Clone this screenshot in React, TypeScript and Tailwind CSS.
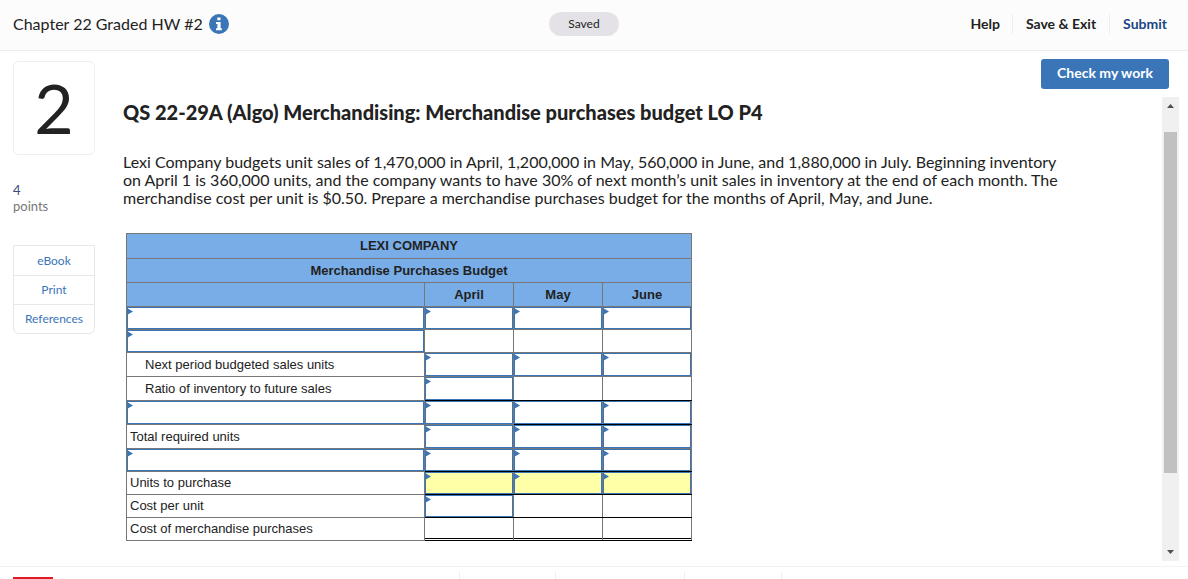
import React, { ReactNode } from 'react';

type Line = 'gray' | 'black';

interface BudgetRow {
  label?: string;
  indent?: boolean;
  tall?: boolean;
  // one flag per month: does the cell take an answer?
  inputs: [boolean, boolean, boolean];
  lines: [Line, Line, Line];
  highlight?: boolean;
  total?: boolean;
}

const MONTHS = ['April', 'May', 'June'];

const ROWS: BudgetRow[] = [
  { inputs: [true, true, true], lines: ['gray', 'gray', 'gray'] },
  { inputs: [false, false, false], lines: ['gray', 'gray', 'gray'] },
  { label: 'Next period budgeted sales units', indent: true, tall: true, inputs: [true, true, true], lines: ['gray', 'gray', 'gray'] },
  { label: 'Ratio of inventory to future sales', indent: true, tall: true, inputs: [true, false, false], lines: ['black', 'black', 'black'] },
  { tall: true, inputs: [true, true, true], lines: ['gray', 'black', 'black'] },
  { label: 'Total required units', tall: true, inputs: [true, true, true], lines: ['gray', 'gray', 'gray'] },
  { inputs: [true, true, true], lines: ['black', 'black', 'black'] },
  { label: 'Units to purchase', inputs: [true, true, true], lines: ['black', 'black', 'black'], highlight: true },
  { label: 'Cost per unit', inputs: [true, false, false], lines: ['black', 'black', 'black'] },
  { label: 'Cost of merchandise purchases', inputs: [false, false, false], lines: ['black', 'black', 'black'], total: true },
];

interface AnswerBoxProps {
  name: string;
  tall?: boolean;
  highlight?: boolean;
}

const AnswerBox = ({ name, tall, highlight }: AnswerBoxProps) => (
  <div className="relative">
    <input
      type="text"
      aria-label={name}
      className={`block w-full border border-[#3a75b8] px-2 outline-none ${tall ? 'h-[23px]' : 'h-[22px]'} ${
        highlight ? 'bg-[#ffffa8]' : 'bg-white'
      }`}
    />
    <svg className="absolute top-px left-0" width="6" height="7" viewBox="0 0 6 7" aria-hidden="true">
      <path d="M0 0 L6 3.5 L0 7 Z" fill="#3a75b8" />
    </svg>
  </div>
);

const HeadCell = ({ children, span }: { children?: ReactNode; span?: number }) => (
  <th colSpan={span} className="border border-[#777777] bg-[#79ade7] p-0 text-center font-bold">
    {children}
  </th>
);

const BudgetTable = () => (
  <table className="ml-[3px] w-[566px] table-fixed border-collapse font-['Liberation_Sans',Arial,sans-serif] text-[13px] text-[#222222]">
    <colgroup>
      <col />
      <col className="w-[89px]" />
      <col className="w-[89px]" />
      <col className="w-[89px]" />
    </colgroup>
    <thead>
      <tr className="h-[25px]">
        <HeadCell span={4}>LEXI COMPANY</HeadCell>
      </tr>
      <tr className="h-6">
        <HeadCell span={4}>Merchandise Purchases Budget</HeadCell>
      </tr>
      <tr className="h-6">
        <HeadCell />
        {MONTHS.map((month) => (
          <HeadCell key={month}>{month}</HeadCell>
        ))}
      </tr>
    </thead>
    <tbody>
      {ROWS.map((row, i) => (
        <tr key={i}>
          <td className="border border-[#777777] p-0">
            {row.label ? (
              <div className={`${row.tall ? 'leading-[23px]' : 'leading-[22px]'} ${row.indent ? 'pl-[18px]' : 'pl-[3px]'}`}>
                {row.label}
              </div>
            ) : (
              <AnswerBox name={`Row ${i + 1} description`} tall={row.tall} />
            )}
          </td>
          {MONTHS.map((month, m) => (
            <td
              key={month}
              className={`border border-[#777777] p-0 align-top ${row.lines[m] === 'black' ? 'border-b-black' : ''}`}
            >
              {row.inputs[m] && (
                <AnswerBox name={`${row.label ?? `Row ${i + 1}`}, ${month}`} tall={row.tall} highlight={row.highlight} />
              )}
              {/* second rule of the double underline */}
              {row.total && <div className="h-[21px] border-b border-black" />}
            </td>
          ))}
        </tr>
      ))}
    </tbody>
  </table>
);

const InfoIcon = () => (
  <svg width="20" height="20" viewBox="0 0 20 20" aria-hidden="true">
    <circle cx="10" cy="10" r="10" fill="#3a75b8" />
    <path d="M8.3 3.4h3.2v2.8H8.3z M7 8h4.6v6.2h1.2v2H7v-2h1.4V10H7z" fill="#ffffff" />
  </svg>
);

const Header = () => (
  <header className="grid h-[51px] shrink-0 grid-cols-[1fr_auto_1fr] items-center border-b border-[#eeeeee] bg-[#fcfcfc] px-[13px] pb-[2px]">
    <div className="flex items-center gap-[6px]">
      <h1 className="text-[16px]">Chapter 22 Graded HW #2</h1>
      <button type="button" aria-label="Assignment information">
        <InfoIcon />
      </button>
    </div>
    <div className="mr-5 h-6 w-[70px] rounded-full bg-[#e4e2e6] text-center text-[12px] leading-6">Saved</div>
    <nav className="flex items-center justify-end text-[14px] leading-5 font-bold">
      <button type="button" className="px-3">Help</button>
      <button type="button" className="border-x border-[#eeeeee] px-[13px]">Save &amp; Exit</button>
      <button type="button" className="pr-2 pl-[13px] text-[#1a4685]">Submit</button>
    </nav>
  </header>
);

const Sidebar = () => (
  <aside className="w-[82px] shrink-0 pt-[10px]">
    <div className="flex h-[94px] items-center justify-center rounded-md border border-[#eeeeee] text-[68px] leading-none">
      2
    </div>
    <div className="mt-[27px] text-[13px] leading-4 text-[#777777]">
      <div className="text-[#3b4a78]">4</div>
      <div>points</div>
    </div>
    <ul className="mt-[31px] divide-y divide-[#e8e8e8] rounded-b-md border border-[#e8e8e8] text-center text-[12px] text-[#3a75b8]">
      <li><a href="#ebook" className="block leading-[29px]">eBook</a></li>
      <li><a href="#print" className="block leading-[28px]">Print</a></li>
      <li><a href="#references" className="block leading-[28px]">References</a></li>
    </ul>
  </aside>
);

const ScrollTrack = () => (
  <div className="flex w-[17px] shrink-0 flex-col items-center bg-[#f0f0f0]" aria-hidden="true">
    <svg className="shrink-0" width="17" height="17" viewBox="0 0 17 17">
      <path d="M8.5 7 L12 11 H5 Z" fill="#505050" />
    </svg>
    <div className="mt-[18px] h-[341px] w-[13px] bg-[#c1c1c1]" />
    <svg className="mt-auto shrink-0" width="17" height="17" viewBox="0 0 17 17">
      <path d="M5 6 H12 L8.5 10 Z" fill="#505050" />
    </svg>
  </div>
);

const Footer = () => (
  <footer className="flex h-[13px] shrink-0 items-end overflow-hidden border-t border-[#f2f2f2] px-[13px]">
    <div className="h-[2px] w-10 bg-[#e21a23]" />
    <div className="flex flex-1 justify-center">
      <div className="ml-3 grid h-[7px] grid-cols-[96px_129px_97px] border-l border-[#eeeeee]">
        <div className="border-r border-[#eeeeee]" />
        <div className="border-r border-[#eeeeee]" />
        <div className="border-r border-[#eeeeee]" />
      </div>
    </div>
  </footer>
);

const App = () => (
  <div className="flex h-screen min-h-[579px] flex-col bg-white font-[Lato,sans-serif] text-[#222222]">
    <Header />
    <div className="flex flex-1 pr-[9px] pl-[13px]">
      <Sidebar />
      <div className="flex flex-1 flex-col pt-2 pb-[5px] pl-7">
        <button
          type="button"
          className="mr-[10px] h-[30px] w-32 self-end rounded-[3px] bg-[#3a75b8] pb-[3px] text-[14px] font-bold text-white"
        >
          Check my work
        </button>
        <div className="mt-2 flex flex-1 justify-between">
          <main className="pt-[3px]">
            <h2 className="text-[20px] leading-6 font-black">
              QS 22-29A (Algo) Merchandising: Merchandise purchases budget LO P4
            </h2>
            <p className="mt-[29px] mb-[26px] max-w-[936px] text-[16px] leading-[18px]">
              Lexi Company budgets unit sales of 1,470,000 in April, 1,200,000 in May, 560,000 in June, and 1,880,000 in
              July. Beginning inventory on April 1 is 360,000 units, and the company wants to have 30% of next month’s
              unit sales in inventory at the end of each month. The merchandise cost per unit is $0.50. Prepare a
              merchandise purchases budget for the months of April, May, and June.
            </p>
            <BudgetTable />
          </main>
          <ScrollTrack />
        </div>
      </div>
    </div>
    <Footer />
  </div>
);

export default App;
